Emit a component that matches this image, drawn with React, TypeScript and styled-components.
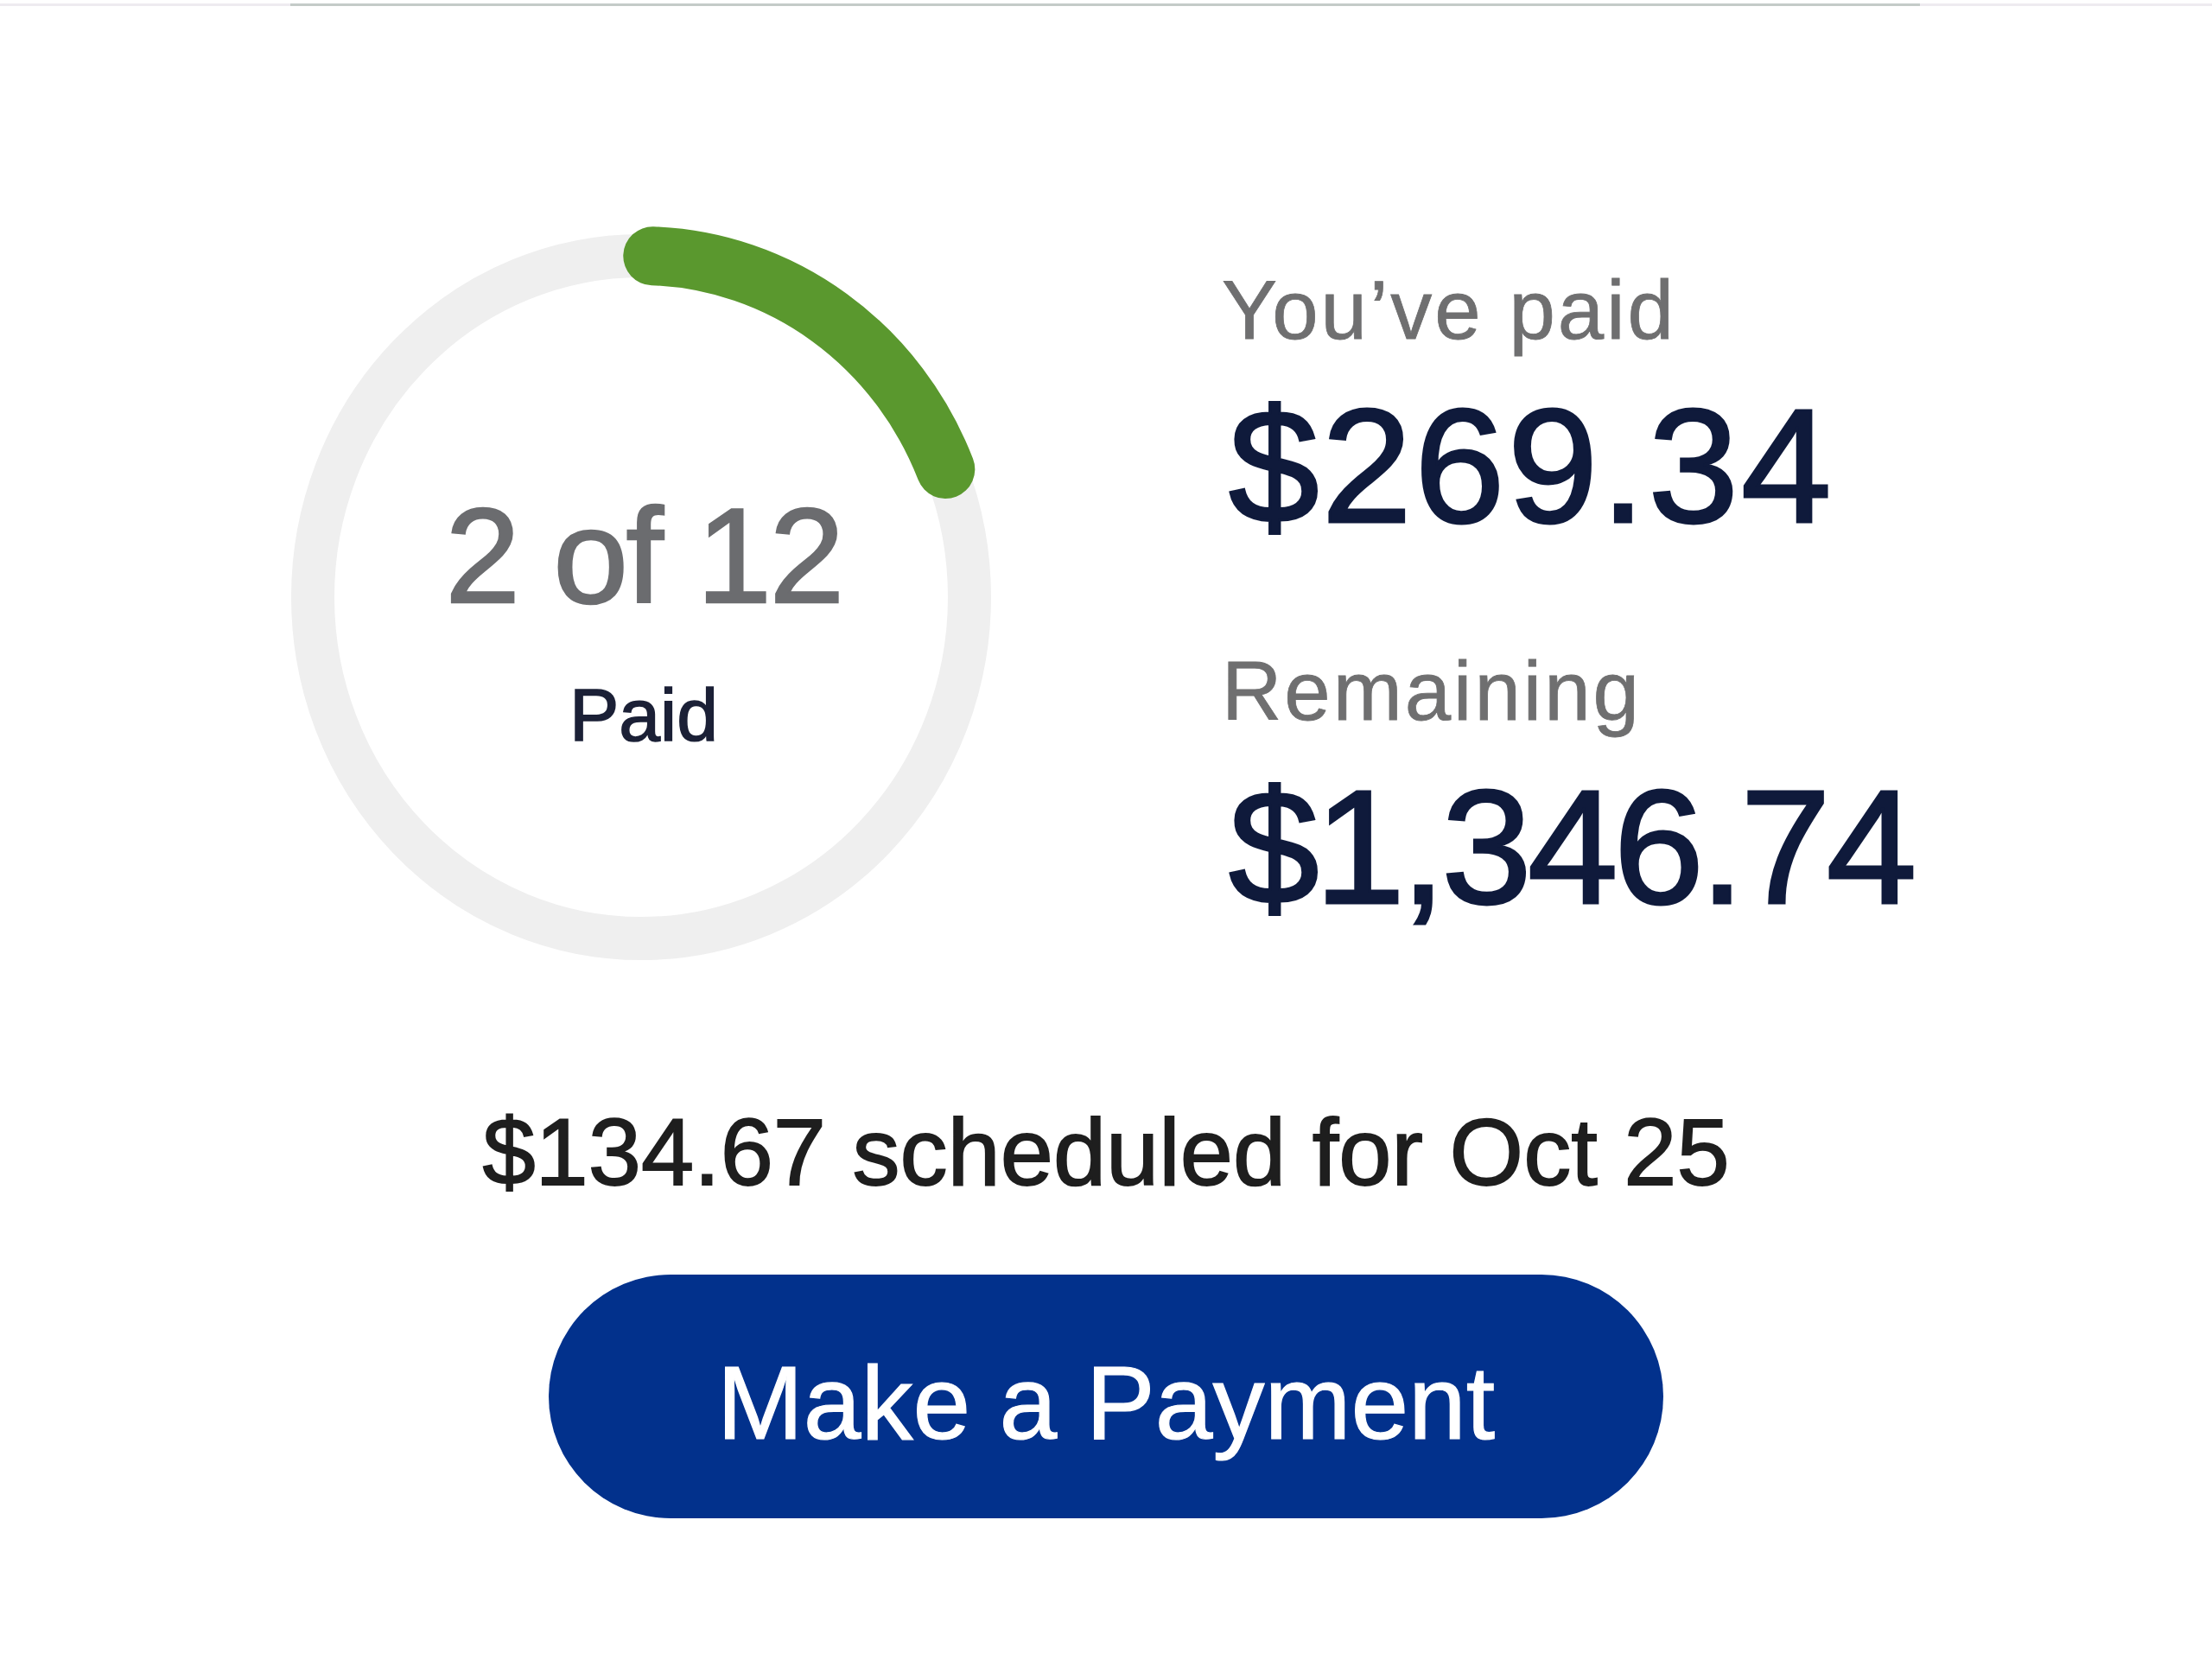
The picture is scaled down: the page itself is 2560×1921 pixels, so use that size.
import React from "react";
import styled, { createGlobalStyle } from "styled-components";

const GlobalStyle = createGlobalStyle`
  html, body {
    margin: 0;
    padding: 0;
    background: #ffffff;
  }
  body {
    font-family: "Liberation Sans", Arial, Helvetica, sans-serif;
    -webkit-font-smoothing: antialiased;
  }
`;

const Page = styled.div`
  width: 2560px;
  min-height: 1921px;
  display: flex;
  flex-direction: column;
  align-items: center;
  background: #ffffff;
`;

const TopRule = styled.div`
  align-self: stretch;
  height: 3px;
  margin-top: 4px;
  background: #eeebf0;
  display: flex;
`;

const RuleSegment = styled.div`
  margin-left: 336px;
  width: 1886px;
  height: 3px;
  background: #c4cbc8;
`;

const Summary = styled.section`
  align-self: stretch;
  display: flex;
  align-items: flex-start;
  gap: 252px;
  padding-left: 322px;
  margin-top: 249px;
`;

const Gauge = styled.div`
  display: grid;
  width: 840px;
  height: 870px;
  & > * {
    grid-area: 1 / 1;
  }
`;

const GaugeText = styled.div`
  display: flex;
  flex-direction: column;
  align-items: center;
  padding-top: 309px;
  padding-left: 6px;
  gap: 63px;
`;

const Count = styled.div`
  font-size: 156px;
  line-height: 1;
  letter-spacing: -2.5px;
  color: #6b6c6f;
  white-space: nowrap;
  -webkit-text-stroke: 2.4px #6b6c6f;
`;

const CountCaption = styled.div`
  font-size: 86px;
  line-height: 1;
  color: #1b2036;
  -webkit-text-stroke: 1.6px #1b2036;
`;

const Stats = styled.div`
  display: flex;
  flex-direction: column;
  gap: 119px;
  padding-top: 55px;
`;

const Stat = styled.div`
  display: flex;
  flex-direction: column;
  gap: 38px;
`;

const StatLabel = styled.div`
  font-size: 96px;
  line-height: 1;
  letter-spacing: 3px;
  color: #6f6f70;
  white-space: nowrap;
  -webkit-text-stroke: 0.8px #6f6f70;
`;

const Amount = styled.div<{ $tracking: number }>`
  margin-left: 8px;
  font-size: 188px;
  line-height: 1;
  letter-spacing: ${(p) => p.$tracking}px;
  color: #0f1a3b;
  white-space: nowrap;
  -webkit-text-stroke: 3px #0f1a3b;
`;

const Schedule = styled.p`
  margin: 152px 0 0;
  font-size: 110px;
  line-height: 1;
  color: #1e1e1e;
  white-space: nowrap;
  -webkit-text-stroke: 1.8px #1e1e1e;
`;

const PayButton = styled.button`
  margin-top: 87px;
  width: 1290px;
  height: 282px;
  border: none;
  border-radius: 141px;
  background: #02318c;
  color: #ffffff;
  font-family: "Liberation Sans", Arial, Helvetica, sans-serif;
  font-size: 120px;
  line-height: 1;
  padding: 14px 0 0;
  display: flex;
  align-items: center;
  justify-content: center;
  cursor: pointer;
  -webkit-text-stroke: 1.2px #ffffff;
`;

const CX = 420;
const CY = 435;
const RX = 380;
const RY = 395;

function pointAt(deg: number) {
  const t = (deg * Math.PI) / 180;
  return { x: CX + RX * Math.sin(t), y: CY - RY * Math.cos(t) };
}

function ProgressRing({ from, to }: { from: number; to: number }) {
  const a = pointAt(from);
  const b = pointAt(to);
  const large = to - from > 180 ? 1 : 0;
  return (
    <svg width={840} height={870} viewBox="0 0 840 870" aria-hidden="true">
      <ellipse cx={CX} cy={CY} rx={RX} ry={RY} fill="none" stroke="#efefef" strokeWidth={50} />
      <path
        d={`M ${a.x} ${a.y} A ${RX} ${RY} 0 ${large} 1 ${b.x} ${b.y}`}
        fill="none"
        stroke="#5a982e"
        strokeWidth={68}
        strokeLinecap="round"
      />
    </svg>
  );
}

export default function App() {
  return (
    <>
      <GlobalStyle />
      <Page>
        <TopRule>
          <RuleSegment />
        </TopRule>
        <Summary>
          <Gauge>
            <ProgressRing from={2} to={68} />
            <GaugeText>
              <Count>2 of 12</Count>
              <CountCaption>Paid</CountCaption>
            </GaugeText>
          </Gauge>
          <Stats>
            <Stat>
              <StatLabel>You’ve paid</StatLabel>
              <Amount $tracking={3}>$269.34</Amount>
            </Stat>
            <Stat>
              <StatLabel>Remaining</StatLabel>
              <Amount $tracking={-5}>$1,346.74</Amount>
            </Stat>
          </Stats>
        </Summary>
        <Schedule>$134.67 scheduled for Oct 25</Schedule>
        <PayButton type="button">Make a Payment</PayButton>
      </Page>
    </>
  );
}
